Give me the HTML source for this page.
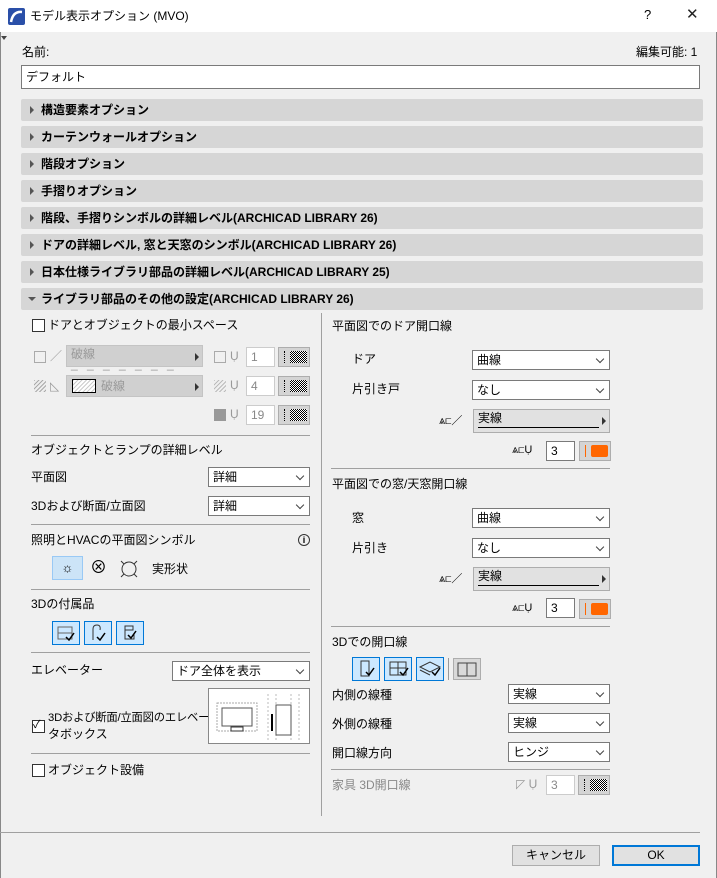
<!DOCTYPE html>
<html><head><meta charset="utf-8"><style>
*{box-sizing:border-box;margin:0;padding:0}
body{width:717px;height:878px;background:#f0f0f0;font-family:"Liberation Sans","Noto Sans CJK JP",sans-serif;font-size:12px;color:#000;position:relative;overflow:hidden}
.a{position:absolute;white-space:nowrap}
.t{position:absolute;white-space:nowrap;line-height:14px}
.hd{position:absolute;left:21px;width:682px;height:22px;background:#d6d6d6;border-radius:2px;font-weight:bold;line-height:22px;padding-left:20px}
.hd:before{content:"";position:absolute;left:9px;top:7px;border-left:4px solid #555;border-top:4px solid transparent;border-bottom:4px solid transparent}
.hd.open:before{left:7px;top:9px;border-top:4px solid #555;border-left:4px solid transparent;border-right:4px solid transparent;border-bottom:0}
.sel{position:absolute;height:20px;background:#fff;border:1px solid #7a7a7a;line-height:18px;padding-left:4px}
.sel:after{content:"";position:absolute;right:6px;top:5px;width:5px;height:5px;border-right:1px solid #444;border-bottom:1px solid #444;transform:rotate(45deg)}
.cb{position:absolute;width:13px;height:13px;border:1px solid #333;background:#fff}
.sep{position:absolute;height:1px;background:#a0a0a0}
.inp{position:absolute;height:20px;background:#fff;border:1px solid #7a7a7a;line-height:18px;padding-left:4px}
.dis{color:#888;border-color:#ccc}
.sw{position:absolute;height:20px;width:32px;background:#d4d4d4;border:1px solid #adadad}
.sw i{position:absolute;left:5px;top:3px;width:1px;height:12px;border-left:1px dotted #000}
.sw b{position:absolute;left:11px;top:3px;width:17px;height:12px;background:repeating-conic-gradient(#000 0 25%,#fff 0 50%) 0 0/2px 2px}
.sw.or i{border-left:1px solid #f60}
.sw.or b{background:#f60;border-radius:2px}
.gbtn{position:absolute;width:28px;height:24px;border:1px solid #0078d7;background:#cce8ff}
.ld{position:absolute;height:24px;background:#e1e1e1;border:1px solid #adadad;padding-left:4px;line-height:16px}
.ld:after{content:"";position:absolute;right:3px;top:7px;border-left:4px solid #333;border-top:4px solid transparent;border-bottom:4px solid transparent}
.ld u{position:absolute;left:4px;right:10px;bottom:4px;height:1px;background:#000}
.btn{position:absolute;height:21px;background:#e1e1e1;border:1px solid #adadad;text-align:center;line-height:19px}
</style></head><body>
<div class="a" style="left:0;top:0;width:717px;height:32px;background:#fff"></div>
<svg class="a" style="left:8px;top:8px" width="17" height="17"><rect width="17" height="17" rx="2" fill="#2a4fa8"/><path d="M3 14 Q5 3 14 4" stroke="#fff" stroke-width="2.5" fill="none"/></svg>
<div class="t" style="left:30px;top:9px">モデル表示オプション (MVO)</div>
<div class="t" style="left:644px;top:8px;font-size:13px">?</div>
<div class="t" style="left:686px;top:8px;font-size:15px;font-weight:300;color:#222">✕</div>
<div class="a" style="left:0;top:32px;width:1px;height:846px;background:#888"></div>
<div class="a" style="left:716px;top:32px;width:1px;height:846px;background:#888"></div>
<div class="a" style="left:1px;top:36px;border-top:4px solid #444;border-left:3px solid transparent;border-right:3px solid transparent"></div>
<div class="t" style="left:22px;top:45px">名前:</div>
<div class="t" style="left:636px;top:45px">編集可能: 1</div>
<div class="inp" style="left:21px;top:65px;width:679px;height:24px;line-height:22px">デフォルト</div>

<div class="hd" style="top:99px">構造要素オプション</div>
<div class="hd" style="top:126px">カーテンウォールオプション</div>
<div class="hd" style="top:153px">階段オプション</div>
<div class="hd" style="top:180px">手摺りオプション</div>
<div class="hd" style="top:207px">階段、手摺りシンボルの詳細レベル(ARCHICAD LIBRARY 26)</div>
<div class="hd" style="top:234px">ドアの詳細レベル, 窓と天窓のシンボル(ARCHICAD LIBRARY 26)</div>
<div class="hd" style="top:261px">日本仕様ライブラリ部品の詳細レベル(ARCHICAD LIBRARY 25)</div>
<div class="hd open" style="top:288px">ライブラリ部品のその他の設定(ARCHICAD LIBRARY 26)</div>

<div class="a" style="left:321px;top:313px;width:1px;height:503px;background:#a0a0a0"></div>

<div class="cb" style="left:32px;top:319px"></div>
<div class="t" style="left:48px;top:318px">ドアとオブジェクトの最小スペース</div>
<div class="a" style="left:34px;top:351px;width:12px;height:12px;border:1px solid #aaa"></div>
<div class="t" style="left:50px;top:349px;color:#999">／</div>
<div class="ld" style="left:66px;top:345px;width:137px;height:22px;background:#d0d0d0;border-color:#c4c4c4;color:#999">破線<span style="position:absolute;left:4px;top:10px;letter-spacing:3px">_ _ _ _ _ _ _</span></div>
<div class="a" style="left:214px;top:351px;width:12px;height:12px;border:1px solid #aaa"></div>
<div class="t" style="left:230px;top:349px;color:#999">Ụ</div>
<div class="inp dis" style="left:246px;top:347px;width:29px">1</div>
<div class="sw" style="left:278px;top:347px"><i></i><b></b></div>

<div class="a" style="left:34px;top:380px;width:12px;height:12px;background:repeating-linear-gradient(135deg,#aaa 0 1px,#eee 1px 3px)"></div>
<div class="t" style="left:50px;top:379px;color:#999">◺</div>
<div class="ld" style="left:66px;top:375px;width:137px;height:22px;background:#d0d0d0;border-color:#c4c4c4;color:#999;padding-left:34px;line-height:20px">破線<span style="position:absolute;left:5px;top:3px;width:24px;height:14px;border:1px solid #000;background:repeating-linear-gradient(135deg,#ccc 0 1px,#fff 1px 3px)"></span></div>
<div class="a" style="left:214px;top:380px;width:12px;height:12px;background:repeating-linear-gradient(135deg,#bbb 0 1px,#f0f0f0 1px 3px)"></div>
<div class="t" style="left:230px;top:378px;color:#999">Ụ</div>
<div class="inp dis" style="left:246px;top:376px;width:29px">4</div>
<div class="sw" style="left:278px;top:376px"><i></i><b></b></div>

<div class="a" style="left:214px;top:409px;width:12px;height:12px;background:#999"></div>
<div class="t" style="left:230px;top:407px;color:#999">Ụ</div>
<div class="inp dis" style="left:246px;top:405px;width:29px">19</div>
<div class="sw" style="left:278px;top:405px"><i></i><b></b></div>
<div class="sep" style="left:31px;top:435px;width:279px"></div>

<div class="t" style="left:31px;top:443px">オブジェクトとランプの詳細レベル</div>
<div class="t" style="left:31px;top:470px">平面図</div>
<div class="sel" style="left:208px;top:467px;width:102px">詳細</div>
<div class="t" style="left:31px;top:499px">3Dおよび断面/立面図</div>
<div class="sel" style="left:208px;top:496px;width:102px">詳細</div>
<div class="sep" style="left:31px;top:524px;width:279px"></div>

<div class="t" style="left:31px;top:533px">照明とHVACの平面図シンボル</div>
<div class="a" style="left:298px;top:534px;width:12px;height:12px;border:1px solid #333;border-radius:50%;font-size:9px;line-height:10px;text-align:center;font-weight:bold">i</div>
<div class="a" style="left:52px;top:556px;width:31px;height:24px;border:1px solid #99c9f5;background:#cce4f7;text-align:center;line-height:22px;font-size:13px">☼</div>
<div class="a" style="left:90px;top:558px;font-size:17px;line-height:20px">⊗</div>
<svg class="a" style="left:119px;top:559px" width="20" height="20"><circle cx="10" cy="10" r="7" fill="none" stroke="#333"/><path d="M2 2L5 5M18 2L15 5M2 18L5 15M18 18L15 15" stroke="#333"/></svg>
<div class="t" style="left:152px;top:562px">実形状</div>
<div class="sep" style="left:31px;top:589px;width:279px"></div>

<div class="t" style="left:31px;top:597px">3Dの付属品</div>
<div class="gbtn" style="left:52px;top:621px"><svg width="26" height="22"><rect x="5" y="5" width="14" height="12" fill="none" stroke="#666"/><path d="M5 11H19" stroke="#666"/><path d="M13 15l3 3 5-7" stroke="#000" stroke-width="1.5" fill="none"/></svg></div>
<div class="gbtn" style="left:84px;top:621px"><svg width="26" height="22"><path d="M8 18V7Q8 3 12 3Q16 3 15 8" stroke="#333" fill="none"/><path d="M12 15l3 3 5-7" stroke="#000" stroke-width="1.5" fill="none"/></svg></div>
<div class="gbtn" style="left:116px;top:621px"><svg width="26" height="22"><path d="M8 4H16V8H8ZM8 8V17H17V12" stroke="#333" fill="none"/><path d="M11 13l3 3 5-7" stroke="#000" stroke-width="1.5" fill="none"/></svg></div>
<div class="sep" style="left:31px;top:652px;width:279px"></div>

<div class="t" style="left:31px;top:663px">エレベーター</div>
<div class="sel" style="left:172px;top:661px;width:138px">ドア全体を表示</div>
<div class="cb" style="left:32px;top:720px"></div>
<div class="t" style="left:33px;top:718px;font-size:11px">✓</div>
<div class="t" style="left:48px;top:711px;font-size:11.3px;letter-spacing:-0.2px">3Dおよび断面/立面図のエレベー</div>
<div class="t" style="left:48px;top:727px">タボックス</div>
<div class="a" style="left:208px;top:688px;width:102px;height:56px;background:#fff;border:1px solid #888">
<svg width="100" height="54"><rect x="8" y="14" width="40" height="28" fill="none" stroke="#aaa" stroke-dasharray="2 1"/><rect x="13" y="19" width="30" height="18" fill="none" stroke="#555"/><rect x="22" y="38" width="12" height="4" fill="none" stroke="#333"/><path d="M59 5V52M67 5V52M82 5V52M90 5V52" stroke="#bbb" stroke-dasharray="2 2"/><rect x="67" y="16" width="15" height="30" fill="none" stroke="#555"/><path d="M63 25V42" stroke="#000" stroke-width="2"/></svg></div>
<div class="sep" style="left:31px;top:753px;width:279px"></div>
<div class="cb" style="left:32px;top:764px"></div>
<div class="t" style="left:48px;top:763px">オブジェクト設備</div>

<div class="t" style="left:332px;top:319px">平面図でのドア開口線</div>
<div class="t" style="left:352px;top:352px">ドア</div>
<div class="sel" style="left:472px;top:350px;width:138px">曲線</div>
<div class="t" style="left:352px;top:382px">片引き戸</div>
<div class="sel" style="left:472px;top:380px;width:138px">なし</div>
<div class="t" style="left:439px;top:414px;font-size:11px">⩓⊏／</div>
<div class="ld" style="left:473px;top:409px;width:137px">実線<u></u></div>
<div class="t" style="left:512px;top:443px;font-size:11px">⩓⊏Ụ</div>
<div class="inp" style="left:546px;top:441px;width:29px">3</div>
<div class="sw or" style="left:579px;top:441px"><i></i><b></b></div>
<div class="sep" style="left:331px;top:468px;width:279px"></div>

<div class="t" style="left:332px;top:477px">平面図での窓/天窓開口線</div>
<div class="t" style="left:352px;top:511px">窓</div>
<div class="sel" style="left:472px;top:508px;width:138px">曲線</div>
<div class="t" style="left:352px;top:541px">片引き</div>
<div class="sel" style="left:472px;top:538px;width:138px">なし</div>
<div class="t" style="left:439px;top:572px;font-size:11px">⩓⊏／</div>
<div class="ld" style="left:473px;top:567px;width:137px">実線<u></u></div>
<div class="t" style="left:512px;top:601px;font-size:11px">⩓⊏Ụ</div>
<div class="inp" style="left:546px;top:598px;width:29px">3</div>
<div class="sw or" style="left:579px;top:599px"><i></i><b></b></div>
<div class="sep" style="left:331px;top:626px;width:279px"></div>

<div class="t" style="left:332px;top:635px">3Dでの開口線</div>
<div class="gbtn" style="left:352px;top:657px"><svg width="26" height="22"><path d="M8 3H16V18H8Z" stroke="#333" fill="none"/><path d="M13 14l3 3 5-7" stroke="#000" stroke-width="1.5" fill="none"/></svg></div>
<div class="gbtn" style="left:384px;top:657px"><svg width="26" height="22"><rect x="5" y="4" width="16" height="13" fill="none" stroke="#333"/><path d="M13 4V17M5 10H21" stroke="#333"/><path d="M15 14l3 3 5-7" stroke="#000" stroke-width="1.5" fill="none"/></svg></div>
<div class="gbtn" style="left:416px;top:657px"><svg width="26" height="22"><path d="M3 9L13 4L23 9L13 14Z" stroke="#333" fill="none"/><path d="M3 12L13 17" stroke="#333"/><path d="M15 14l3 3 5-7" stroke="#000" stroke-width="1.5" fill="none"/></svg></div>
<div class="a" style="left:448px;top:658px;width:1px;height:22px;background:#999"></div>
<div class="a" style="left:453px;top:658px;width:28px;height:22px;border:1px solid #adadad;background:#d9d9d9"><svg width="26" height="20"><rect x="4" y="4" width="18" height="13" fill="none" stroke="#444"/><path d="M13 4V17" stroke="#444"/></svg></div>
<div class="t" style="left:332px;top:688px">内側の線種</div>
<div class="sel" style="left:508px;top:684px;width:102px">実線</div>
<div class="t" style="left:332px;top:717px">外側の線種</div>
<div class="sel" style="left:508px;top:713px;width:102px">実線</div>
<div class="t" style="left:332px;top:746px">開口線方向</div>
<div class="sel" style="left:508px;top:742px;width:102px">ヒンジ</div>
<div class="sep" style="left:331px;top:769px;width:279px"></div>
<div class="t" style="left:332px;top:778px;color:#888">家具 3D開口線</div>
<div class="t" style="left:516px;top:777px;color:#999">◸ Ụ</div>
<div class="inp dis" style="left:546px;top:775px;width:29px">3</div>
<div class="sw" style="left:578px;top:775px"><i></i><b></b></div>

<div class="a" style="left:0;top:832px;width:700px;height:1px;background:#a0a0a0"></div>
<div class="btn" style="left:512px;top:845px;width:88px">キャンセル</div>
<div class="btn" style="left:612px;top:845px;width:88px;border:2px solid #0078d7;line-height:17px">OK</div>
</body></html>
